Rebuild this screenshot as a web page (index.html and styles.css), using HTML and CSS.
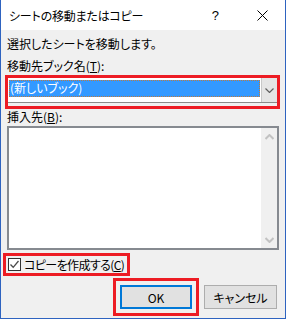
FILE: index.html
```html
<!DOCTYPE html>
<html lang="ja">
<head>
  <meta charset="UTF-8">
  <title>シートの移動またはコピー</title>
  <link rel="stylesheet" href="styles.css">
</head>
<body>
  <div class="window">
    <!-- タイトルバー -->
    <div class="titlebar">
      <span class="title">シートの移動またはコピー</span>
      <span class="help">?</span>
      <svg class="close" width="11" height="11" viewBox="0 0 11 11">
        <path d="M0.5 0.5 L10.5 10.5 M10.5 0.5 L0.5 10.5" stroke="#000" stroke-width="1" fill="none"/>
      </svg>
    </div>

    <div class="content">
      <p class="msg">選択したシートを移動します。</p>
      <p class="label">移動先ブック名(<u>T</u>):</p>

      <div class="mark combo-mark">
        <div class="combo">
          <div class="combo-field">
            <span class="selected">(新しいブック)</span>
          </div>
          <div class="combo-btn">
            <svg width="9" height="5" viewBox="0 0 9 5">
              <path d="M0.5 0.5 L4.5 4.5 L8.5 0.5" stroke="#606060" stroke-width="1.2" fill="none"/>
            </svg>
          </div>
        </div>
      </div>

      <p class="label insert">挿入先(<u>B</u>):</p>
      <div class="listbox">
        <div class="list-items"></div>
        <div class="scrollbar">
          <svg width="9" height="6" viewBox="0 0 9 6">
            <path d="M0.5 5 L4.5 1 L8.5 5" stroke="#c2c2c2" stroke-width="2" fill="none"/>
          </svg>
          <svg width="9" height="6" viewBox="0 0 9 6">
            <path d="M0.5 1 L4.5 5 L8.5 1" stroke="#c2c2c2" stroke-width="2" fill="none"/>
          </svg>
        </div>
      </div>

      <div class="mark check-mark">
        <span class="checkbox">
          <svg width="11" height="11" viewBox="0 0 11 11">
            <path d="M1.5 5.5 L4.2 8.3 L9.5 2" stroke="#4a4a4a" stroke-width="1.3" fill="none"/>
          </svg>
        </span>
        <span class="check-text">コピーを作成する(<u>C</u>)</span>
      </div>

      <div class="buttons">
        <div class="mark ok-mark">
          <button class="btn ok">OK</button>
        </div>
        <button class="btn">キャンセル</button>
      </div>
    </div>
  </div>
</body>
</html>
```

FILE: styles.css
```css
* { margin: 0; padding: 0; box-sizing: border-box; }
html, body {
  width: 286px;
  height: 320px;
  overflow: hidden;
}
body {
  font-family: "Noto Sans CJK JP", "Noto Sans", sans-serif;
  font-size: 12px;
  font-feature-settings: "palt";
  color: #000;
  background: #fff;
}

.window {
  width: 286px;
  height: 319px;
  border: 1px solid #2e63c0;
  border-top: none;
  display: flex;
  flex-direction: column;
}

/* タイトルバー */
.titlebar {
  height: 30px;
  background: #fff;
  display: flex;
  align-items: center;
  padding-left: 8px;
}
.title {
  flex: 1;
  font-size: 12px;
  letter-spacing: -0.2px;
}
.help {
  font-family: "Liberation Sans", sans-serif;
  font-size: 13px;
  margin-right: 38px;
}
.close {
  margin-right: 17px;
}

.content {
  flex: 1;
  background: #f0f0f0;
  padding: 6px 6px 0 6px;
}
.msg {
  line-height: 16px;
}
.label {
  line-height: 16px;
  margin-top: 6px;
}
.label u { text-underline-offset: 1px; }

/* 赤い強調枠 */
.mark {
  border: 3px solid #ed1c24;
}

.combo-mark {
  margin: 1px -1px 0 -2px;
  height: 34px;
}
.combo {
  display: flex;
  height: 25px;
  background: #fff;
  border-bottom: 1px solid #8a8a8a;
}
.combo-field {
  flex: 1;
  padding: 2px 1px 0 1px;
}
.selected {
  display: block;
  height: 17px;
  background: #3399ff;
  color: #fff;
  line-height: 16px;
  padding-left: 1px;
  outline: 1px dotted #c07a3a;
  outline-offset: -1px;
}
.combo-btn {
  width: 16px;
  background: #e5e5e5;
  border-left: 1px solid #c8c8c8;
  display: flex;
  align-items: center;
  justify-content: center;
}

.insert {
  margin-top: 0;
}

.listbox {
  margin-top: 1px;
  height: 124px;
  border: 2px solid #868a90;
  background: #fff;
  display: flex;
}
.list-items { flex: 1; }
.scrollbar {
  width: 16px;
  background: #f0f0f0;
  display: flex;
  flex-direction: column;
  justify-content: space-between;
  align-items: center;
  padding: 6px 0 5px 0;
}

.check-mark {
  margin: 3px 0 0 -4px;
  width: 127px;
  height: 23px;
  display: flex;
  align-items: center;
  padding-left: 2px;
}
.checkbox {
  flex: none;
  width: 13px;
  height: 13px;
  border: 1px solid #333;
  background: #fff;
  display: flex;
  align-items: center;
  justify-content: center;
}
.check-text {
  margin-left: 3px;
  line-height: 16px;
  white-space: nowrap;
  letter-spacing: -0.6px;
}

.buttons {
  display: flex;
  justify-content: flex-end;
  align-items: center;
  gap: 5px;
  margin-top: 2px;
  padding-right: 2px;
}
.ok-mark {
  padding: 4px;
}
.btn {
  width: 73px;
  height: 24px;
  background: #e1e1e1;
  border: 1px solid #adadad;
  font-family: inherit;
  font-size: 12px;
  font-weight: 400;
  font-feature-settings: "palt";
  color: #000;
}
.btn.ok {
  width: 72px;
  border: 2px solid #0078d7;
}
```
